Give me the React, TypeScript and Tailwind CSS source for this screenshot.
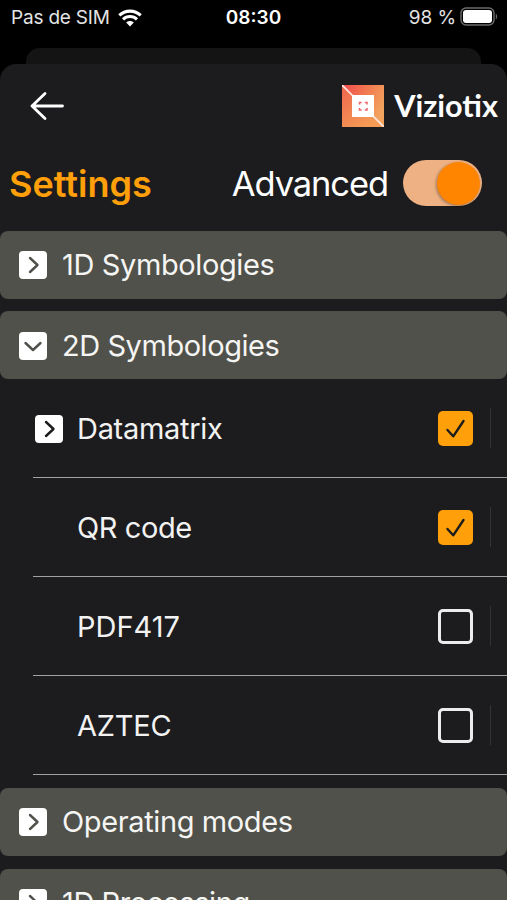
import clsx from "clsx";

type Symbology = { name: string; checked: boolean; expandable?: boolean; tracking: string };

const symbologies: Symbology[] = [
  { name: "Datamatrix", checked: true, expandable: true, tracking: "tracking-[-0.3px]" },
  { name: "QR code", checked: true, tracking: "tracking-[-0.4px]" },
  { name: "PDF417", checked: false, tracking: "tracking-[0px]" },
  { name: "AZTEC", checked: false, tracking: "tracking-[-0.25px]" },
];

function StatusBar() {
  return (
    <div className="flex h-12 shrink-0 items-start justify-between pt-[6px] pr-[9px] pl-[11px] text-[19px] leading-6 text-[#e4e4e4]">
      <div className="flex w-[180px] items-center gap-[8px] whitespace-nowrap">
        <span className="tracking-[-0.2px]">Pas de SIM</span>
        <svg width="24" height="18" viewBox="0 0 24 18" fill="none" stroke="white" strokeWidth="3.1">
          <path d="M1.3 6.4C7.2.7 16.8.7 22.7 6.4" />
          <path d="M5 10.4c4-3.8 10-3.8 14 0" />
          <path d="M12 17.4l-3.8-4c2.2-2 5.4-2 7.6 0z" fill="white" stroke="none" />
        </svg>
      </div>
      <span className="pr-[2px] font-semibold text-white">08:30</span>
      <div className="flex w-[180px] items-center justify-end gap-1 whitespace-nowrap">
        <span className="tracking-[-0.1px]">98 %</span>
        <svg width="38" height="19" viewBox="0 0 38 19" fill="none" className="-mt-[3px]">
          <rect x="1" y="1" width="33" height="17" rx="5" stroke="#6b6b6b" strokeWidth="1.4" />
          <rect x="3" y="3" width="29" height="13" rx="3" fill="white" />
          <path d="M35.8 6.7c1.8.8 1.8 4.8 0 5.6z" fill="#6b6b6b" />
        </svg>
      </div>
    </div>
  );
}

function Logo() {
  return (
    <svg width="42" height="42" viewBox="0 0 42 42" fill="none">
      <defs>
        <linearGradient id="logoTop" x1="0" y1="0" x2="42" y2="20" gradientUnits="userSpaceOnUse">
          <stop stopColor="#ef4b50" />
          <stop offset="0.5" stopColor="#f27650" />
          <stop offset="1" stopColor="#f2a35e" />
        </linearGradient>
        <linearGradient id="logoBottom" x1="0" y1="6" x2="24" y2="42" gradientUnits="userSpaceOnUse">
          <stop stopColor="#ee6a50" />
          <stop offset="1" stopColor="#f59b55" />
        </linearGradient>
      </defs>
      <path d="M0 0h42v42z" fill="url(#logoTop)" />
      <path d="M0 0v42h42z" fill="url(#logoBottom)" />
      <path d="M0 0l42 42" stroke="#fde4dc" strokeWidth="1.8" />
      <path d="M10 10h22v22H10z" fill="white" />
      <path
        d="M17.5 19.5v-2h2.2M22.8 17.5H25v2M25 23v2h-2.2M19.7 25h-2.2v-2"
        stroke="#ee6468"
        strokeWidth="1.5"
      />
    </svg>
  );
}

function Header() {
  return (
    <header className="flex h-[84px] shrink-0 items-center justify-between pr-[9px] pl-[30px]">
      <svg width="35" height="30" viewBox="0 0 35 30" fill="none" stroke="white" strokeWidth="2.8" strokeLinecap="round" strokeLinejoin="round">
        <path d="M32.5 15H2M15 2.5L2 15l13 12.5" />
      </svg>
      <div className="flex items-center gap-[10px]">
        <Logo />
        <span className="font-[Lato] text-[30.6px] leading-9 font-bold text-white">Viziotix</span>
      </div>
    </header>
  );
}

function Chevron({ open, dark }: { open?: boolean; dark?: boolean }) {
  return (
    <span className="flex size-7 shrink-0 items-center justify-center rounded-[4px] bg-white">
      <svg
        width="28"
        height="28"
        viewBox="0 0 28 28"
        fill="none"
        stroke={dark ? "#1c1c1e" : "#50514a"}
        strokeWidth="2.4"
        strokeLinecap="round"
        strokeLinejoin="round"
      >
        <path d={open ? "M6.5 11l7.5 7 7.5-7" : "M11 7l7.5 7-7.5 7"} />
      </svg>
    </span>
  );
}

function Section({ title, open, tracking }: { title: string; open?: boolean; tracking: string }) {
  return (
    <div
      className={clsx(
        "flex h-[68px] shrink-0 items-center gap-[15px] rounded-lg bg-[#50514a] pl-[19px] text-[#f5f5f3]",
        open && "pt-[2px]"
      )}
    >
      <Chevron open={open} />
      <span className={clsx("text-[29px] leading-9 whitespace-nowrap", tracking)}>{title}</span>
    </div>
  );
}

function Checkbox({ checked }: { checked: boolean }) {
  if (!checked) {
    return <span className="size-[35px] rounded-[5px] border-3 border-[#ececec]" />;
  }
  return (
    <span className="size-[35px] rounded-[5px] bg-[#ff9f0a]">
      <svg width="35" height="35" viewBox="0 0 35 35" fill="none" stroke="#1c1c1e" strokeWidth="2.4" strokeLinecap="round" strokeLinejoin="round">
        <path d="M9.5 19l5.7 6.3L25.5 10" />
      </svg>
    </span>
  );
}

function SymbologyRow({ item }: { item: Symbology }) {
  return (
    <div className="ml-[33px] flex h-[99px] items-center border-b border-[#a0a0a2] pl-[2px]">
      <span className="w-[42px] pt-[2px]">{item.expandable && <Chevron dark />}</span>
      <span className={clsx("flex-1 pt-[2px] text-[29px] leading-9 text-[#f2f2f2]", item.tracking)}>{item.name}</span>
      <Checkbox checked={item.checked} />
      <span className="mr-[16px] ml-[17px] h-10 w-px bg-[#333335]" />
    </div>
  );
}

export default function App() {
  return (
    <div className="flex h-[900px] w-[507px] flex-col overflow-hidden bg-black font-[Inter,sans-serif]">
      <StatusBar />
      <div className="mx-[26px] h-4 shrink-0 rounded-t-[14px] bg-[#141415]" />
      <main className="flex min-h-0 flex-1 flex-col overflow-hidden rounded-t-[16px] bg-[#1c1c1e]">
        <Header />
        <div className="flex h-[83px] shrink-0 items-start justify-between pt-3 pr-[25px] pl-[9px]">
          <h1 className="pt-px text-[36px] leading-[46px] font-semibold text-[#ff9f0a]">Settings</h1>
          <div className="flex items-center gap-[15px]">
            <span className="pt-[2px] text-[34.5px] leading-[44px] tracking-[-1.1px] text-white">Advanced</span>
            <div className="flex h-[46px] w-[79px] items-center justify-end rounded-full bg-[#edb183] pr-[2px]">
              <span className="size-[43px] rounded-full bg-[#ff8500] shadow-[-1px_1px_3px_rgba(0,0,0,0.35)]" />
            </div>
          </div>
        </div>
        <div className="flex shrink-0 flex-col gap-3">
          <Section title="1D Symbologies" tracking="tracking-[-0.38px]" />
          <Section title="2D Symbologies" open tracking="tracking-[-0.45px]" />
        </div>
        <div className="shrink-0">
          {symbologies.map((item) => (
            <SymbologyRow key={item.name} item={item} />
          ))}
        </div>
        <div className="mt-[13px] flex shrink-0 flex-col gap-[13px]">
          <Section title="Operating modes" tracking="tracking-[-0.38px]" />
          <Section title="1D Processing" tracking="tracking-[-0.42px]" />
        </div>
      </main>
    </div>
  );
}
